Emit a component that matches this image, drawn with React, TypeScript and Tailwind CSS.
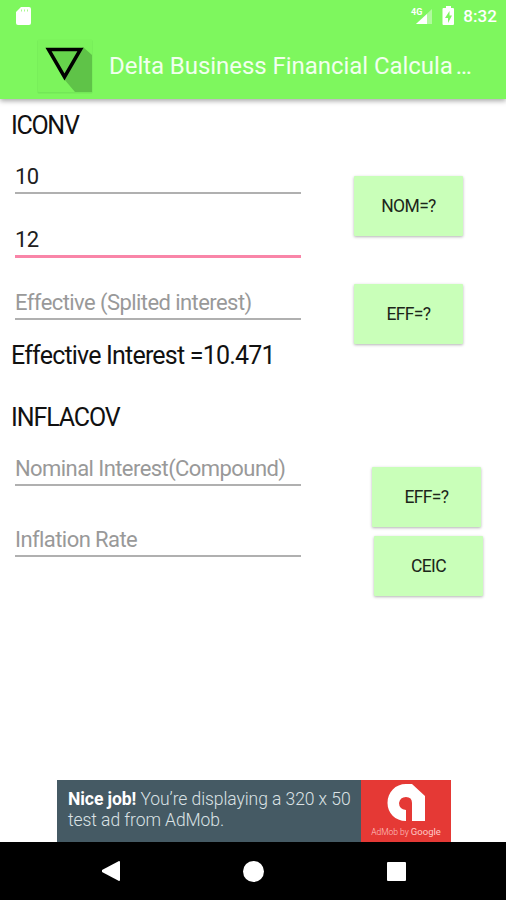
import clsx from "clsx";

interface FieldProps {
  value?: string;
  hint?: string;
  focused?: boolean;
  className?: string;
}

const Field: React.FC<FieldProps> = ({ value, hint, focused, className }) => {
  return (
    <div
      className={clsx(
        "ml-[15px] flex w-[286px] flex-col justify-end",
        focused ? "border-b-[3px] border-[#f985a8]" : "border-b-2 border-[#b0b0b0]",
        className
      )}
    >
      <span
        className={clsx(
          "-mb-px whitespace-nowrap text-[22px] leading-8",
          value ? "tracking-[-0.5px] text-[#202020]" : "tracking-[-0.57px] text-[#999999]"
        )}
      >
        {value || hint}
      </span>
    </div>
  );
};

interface ActionButtonProps {
  label: string;
  className?: string;
}

const ActionButton: React.FC<ActionButtonProps> = ({ label, className }) => {
  return (
    <button
      type="button"
      className={clsx(
        "block h-[60px] w-[109px] rounded-[1px] bg-[#c9ffb9] text-[17.500px] tracking-[-0.65px] text-[#1c261a] shadow-[0_1px_3px_rgba(0,0,0,0.3)]",
        className
      )}
    >
      {label}
    </button>
  );
};

const StatusBar = () => (
  <div className="flex h-8 items-center justify-between pl-[15px] pr-[9px]">
    <svg width="17" height="20" viewBox="0 0 17 20" fill="#fff" aria-hidden="true">
      <path d="M6 1h8q2 0 2 2v14q0 2-2 2H3q-2 0-2-2V6z" />
      <path d="M6.5 3.5v2M9.5 3.5v2M12.5 3.5v2" stroke="#a9f990" />
    </svg>
    <div className="flex items-center">
      <svg width="53" height="22" viewBox="0 0 53 22" fill="#fff" aria-hidden="true">
        <text x="1" y="10" fontSize="9" fontWeight="700" fontFamily="Roboto, sans-serif">
          4G
        </text>
        <path d="M22 4v15H6z" fillOpacity=".4" />
        <path d="M17 9v10H6z" />
        <path d="M36 1h5v2h2q1 0 1 1v15q0 1-1 1H33.500q-1 0-1-1V4q0-1 1-1H36z" />
        <path d="M39.500 6l-4.500 7h3v5l4-7.500h-2.500z" fill="#7df65d" />
      </svg>
      <span className="text-[17px] font-medium leading-8 tracking-[0.1px] text-white">
        8:32
      </span>
    </div>
  </div>
);

const AppBar = () => (
  <header className="h-[99px] bg-[#7ef75e] shadow-[0_2px_5px_rgba(0,0,0,0.35)]">
    <StatusBar />
    <div className="flex h-[67px] items-center pl-[37px]">
      <svg width="56" height="56" viewBox="0 0 56 56" aria-hidden="true">
        <rect x="0.500" y="2" width="55" height="53.500" rx="1" fill="#73e857" />
        <rect x="1" y="1" width="54" height="53" rx="1" fill="#7cf45c" />
        <path d="M46 9l9 8v37H38L27 41z" fill="#5fc348" />
        <path d="M11.500 11.500h32L27.500 39z" fill="#66d44c" stroke="#000" strokeWidth="3.500" />
      </svg>
      <h1 className="ml-4 whitespace-nowrap text-[24px] leading-8 tracking-[-0.05px] text-[#f2ffee]">
        Delta Business Financial Calcula<span className="ml-[3px]">…</span>
      </h1>
    </div>
  </header>
);

const AdBanner = () => (
  <div className="flex h-[62px] w-[451px] pl-[57px]">
    <p className="flex-1 whitespace-nowrap bg-[#455a64] pl-[11px] pt-[9px] text-[17.500px] font-light leading-[21px] tracking-[-0.07px] text-[#dbe2e5]">
      <b className="font-bold text-white">Nice job!</b> You’re displaying a 320 x 50
      <br />
      test ad from AdMob.
    </p>
    <div className="flex w-[90px] flex-col items-center bg-[#e53935] pt-[3px]">
      <svg width="40" height="40" viewBox="0 0 40 40" aria-hidden="true">
        <path
          d="M20 38C9 38 1.500 30 1.500 20 1.500 9 9.500 1 20 1h6l13 12v25H26V20q0-6-6-6t-7 6q0 6 7 7z"
          fill="#fff"
        />
        <path d="M22 27v11" stroke="#e53935" strokeWidth="3" />
      </svg>
      <span className="mt-[3px] whitespace-nowrap text-[8.500px] font-light leading-3 text-[#ffc9c7]">
        AdMob by <span className="text-[9.500px] font-normal">Google</span>
      </span>
    </div>
  </div>
);

const NavBar = () => (
  <nav className="flex h-[58px] items-center bg-black pl-[101px]">
    <svg width="20" height="22" viewBox="0 0 20 22" fill="#fff" aria-hidden="true">
      <path d="M18 1q1 0 1 1v18q0 1-1 1L1 12v-2z" />
    </svg>
    <div className="ml-[122px] size-[21px] rounded-full bg-white" />
    <div className="ml-[123px] size-[19px] rounded-[1px] bg-white" />
  </nav>
);

const App = () => {
  return (
    <div className="flex h-[900px] w-[506px] flex-col overflow-hidden bg-white font-['Roboto',sans-serif]">
      <AppBar />

      <main className="flex-1">
        <section className="flex h-[289px]">
          <div className="w-[354px] pt-[11px]">
            <h2 className="pl-[11px] text-[25px] leading-8 tracking-[-1.3px] text-[#111]">ICONV</h2>
            <Field value="10" className="h-[52px]" />
            <Field value="12" focused className="h-[64px]" />
            <Field hint="Effective (Splited interest)" className="h-[62px]" />
            <p className="mt-[20px] whitespace-nowrap pl-[11px] text-[25px] leading-8 tracking-[-0.8px] text-[#111]">
              Effective Interest =10.471
            </p>
          </div>
          <div className="pt-[77px]">
            <ActionButton label="NOM=?" />
            <ActionButton label="EFF=?" className="mt-12" />
          </div>
        </section>

        <section className="flex">
          <div className="w-[372px] pt-[14px]">
            <h2 className="pl-[11px] text-[25px] leading-8 tracking-[-1.1px] text-[#111]">INFLACOV</h2>
            <Field hint="Nominal Interest(Compound)" className="h-[52px]" />
            <Field hint="Inflation Rate" className="h-[71px]" />
          </div>
          <div className="pt-[79px]">
            <ActionButton label="EFF=?" />
            <ActionButton label="CEIC" className="ml-[2px] mt-[9px]" />
          </div>
        </section>
      </main>

      <AdBanner />
      <NavBar />
    </div>
  );
};

export default App;
